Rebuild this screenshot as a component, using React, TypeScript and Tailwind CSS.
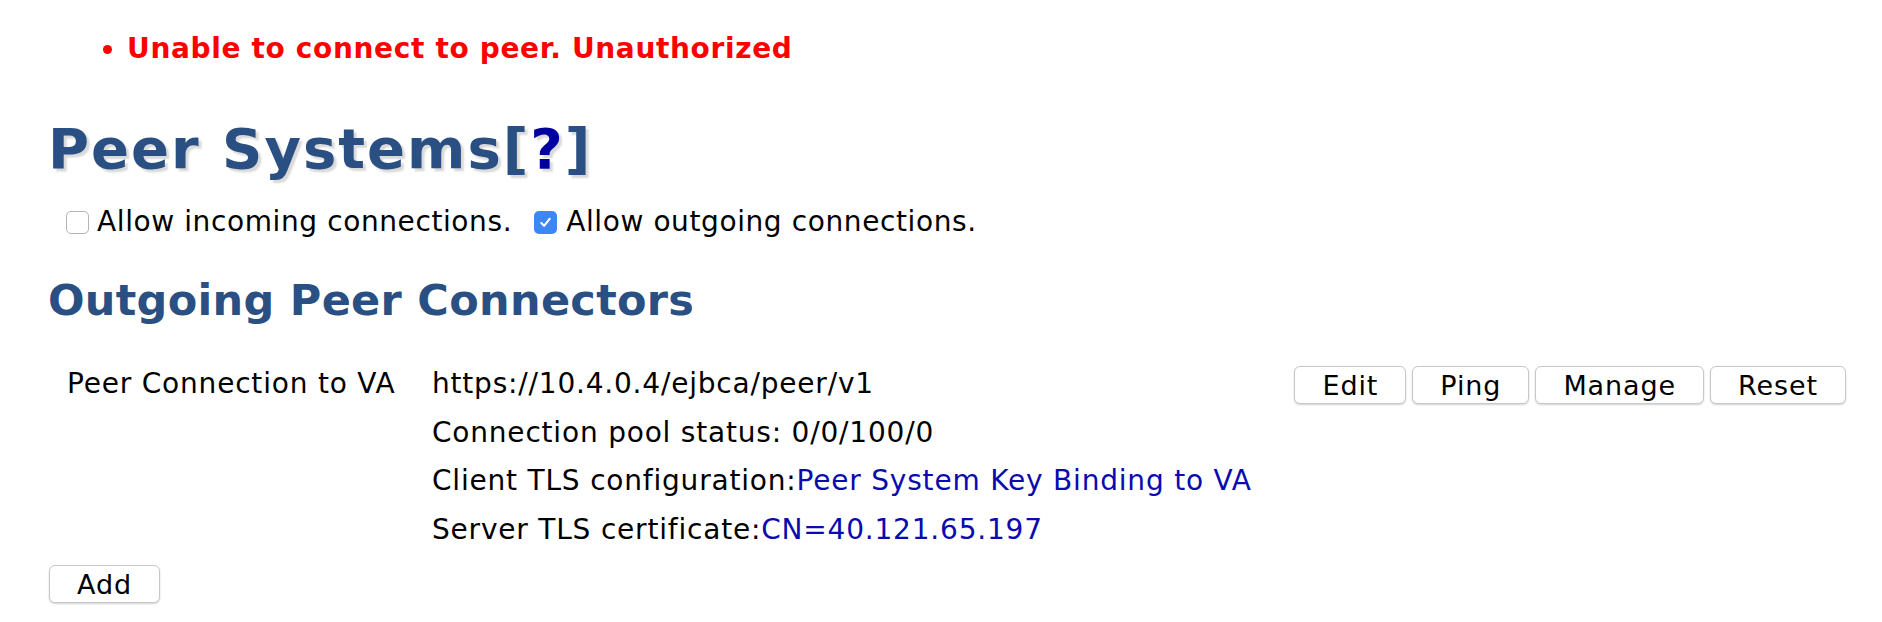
import React from "react";

const btn =
  "h-[38px] rounded-[6px] border border-[#c8c8c8] bg-white px-[27px] text-[27px] leading-none tracking-[0.9px] text-black shadow-[0_1px_2px_rgba(0,0,0,0.18)]";

export default function App() {
  return (
    <div className="min-h-screen bg-white pt-[32px] pl-[48px] pr-[36px] text-black [font-family:'DejaVu_Sans',Verdana,sans-serif] text-[28px] tracking-[0.8px]">
      {/* error messages */}
      <ul className="list-disc pl-[79px] text-[28px] font-bold leading-[34px] tracking-[0.65px] text-[#ff0000]">
        <li>Unable to connect to peer. Unauthorized</li>
      </ul>

      <h1 className="mt-[55px] text-[56px] font-bold leading-[56px] tracking-[2px] text-[#2a4f82] [text-shadow:3px_3px_2px_#d9d9d9]">
        Peer Systems[<a className="text-[#0000a0]">?</a>]
      </h1>

      {/* allow connections */}
      <div className="mt-[28px] flex items-center pl-[18px] leading-[34px] tracking-[0.6px]">
        <label className="flex items-center">
          <span className="mr-[8px] inline-block h-[23px] w-[23px] rounded-[5px] border border-[#b4b4b4] bg-white" />
          Allow incoming connections.
        </label>
        <label className="ml-[22px] flex items-center">
          <span className="mr-[9px] flex h-[23px] w-[23px] items-center justify-center rounded-[5px] bg-[#3d87f5]">
            <svg viewBox="0 0 16 16" className="h-[15px] w-[15px]">
              <path d="M3.5 8.5 L6.5 11.5 L12.5 4" fill="none" stroke="white" strokeWidth="2.2" strokeLinecap="round" strokeLinejoin="round" />
            </svg>
          </span>
          Allow outgoing connections.
        </label>
      </div>

      <h2 className="mt-[40px] text-[43px] font-bold leading-[43px] tracking-[0.3px] text-[#2a4f82]">Outgoing Peer Connectors</h2>

      {/* connectors */}
      <div className="mt-[38px] flex">
        <div className="w-[384px] pl-[19px] leading-[48.5px]">Peer Connection to VA</div>
        <div className="flex-1 leading-[48.5px]">
          <div>https://10.4.0.4/ejbca/peer/v1</div>
          <div>Connection pool status: 0/0/100/0</div>
          <div>
            Client TLS configuration:<a className="text-[#0a0ab0]">Peer System Key Binding to VA</a>
          </div>
          <div>
            Server TLS certificate:<a className="text-[#0a0ab0]">CN=40.121.65.197</a>
          </div>
        </div>
        <div className="mt-[6px] flex gap-[6px] self-start">
          <button className={btn}>Edit</button>
          <button className={btn}>Ping</button>
          <button className={btn}>Manage</button>
          <button className={btn}>Reset</button>
        </div>
      </div>

      <button className={`${btn} mt-[11px] ml-[1px]`}>Add</button>
    </div>
  );
}
